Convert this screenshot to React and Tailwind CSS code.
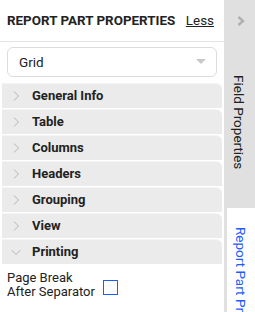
import React from "react";

const items = ["General Info", "Table", "Columns", "Headers", "Grouping", "View"];

function Chevron({ down }) {
  return (
    <svg width="10" height="10" viewBox="0 0 10 10" className="shrink-0">
      {down ? (
        <path d="M0.5 3 L5 7.5 L9.5 3" fill="none" stroke="#b5b5b5" strokeWidth="1" />
      ) : (
        <path d="M3 0.5 L7.5 5 L3 9.5" fill="none" stroke="#b5b5b5" strokeWidth="1" />
      )}
    </svg>
  );
}

function Row({ label, down }) {
  return (
    <div className="h-[25px] mb-px bg-[#ebebeb] rounded-tr-[6px] flex items-center pl-[9px] gap-[11px] border-t border-[#f4f4f4]">
      <Chevron down={down} />
      <span className="text-[13px] font-bold text-[#222]">{label}</span>
    </div>
  );
}

export default function App() {
  return (
    <div className="w-[255px] h-[312px] flex overflow-hidden bg-white" style={{ fontFamily: "Roboto, 'Liberation Sans', sans-serif" }}>
      <div className="w-[224px] shrink-0 flex flex-col">
        <div className="h-[42px] border-b border-[#e4e4e4] flex items-center justify-between pl-[7px] pr-[10px] pt-[2px]">
          <span className="text-[13.4px] font-bold text-[#222]">REPORT PART PROPERTIES</span>
          <span className="text-[13.4px] text-[#222] underline">Less</span>
        </div>
        <div className="px-[7px] pt-[5px] pb-[6px]">
          <div className="h-[30px] border border-[#dcdcdc] rounded-[6px] flex items-center justify-between pl-[11px] pr-[10px]">
            <span className="text-[13.5px] text-[#222]">Grid</span>
            <svg width="10" height="6" viewBox="0 0 10 6"><path d="M0 0 L10 0 L5 5 Z" fill="#c8c8c8" /></svg>
          </div>
        </div>
        <div className="pl-[2px] pr-[2px] flex flex-col">
          {items.map((l) => (
            <Row key={l} label={l} />
          ))}
          <Row label="Printing" down />
        </div>
        <div className="flex items-center pl-[7px] pt-[6px] gap-[8px]">
          <div className="text-[13px] leading-[14px] text-[#222]">
            Page Break
            <br />
            After Separator
          </div>
          <div className="w-[15px] h-[15px] border-[1.5px] border-[#1a5cff] mt-[4px]" />
        </div>
      </div>
      <div className="flex-1 bg-[#e0e0e0] flex flex-col">
        <div className="h-[42px] flex items-start justify-center pt-[16px] pl-[2px]">
          <svg width="8" height="10" viewBox="0 0 8 10"><path d="M1.5 1 L6 5 L1.5 9" fill="none" stroke="#b0b0b0" strokeWidth="2.4" /></svg>
        </div>
        <div className="h-[166px] flex justify-center pt-[33px] pr-[1px]">
          <span className="text-[13.5px] text-[#222]" style={{ writingMode: "vertical-rl" }}>Field Properties</span>
        </div>
        <div className="flex-1 bg-white ml-[3px] flex justify-center pt-[19px] overflow-hidden">
          <span className="text-[13.5px] text-[#1a5cff] whitespace-nowrap" style={{ writingMode: "vertical-rl" }}>Report Part Properties</span>
        </div>
      </div>
    </div>
  );
}
